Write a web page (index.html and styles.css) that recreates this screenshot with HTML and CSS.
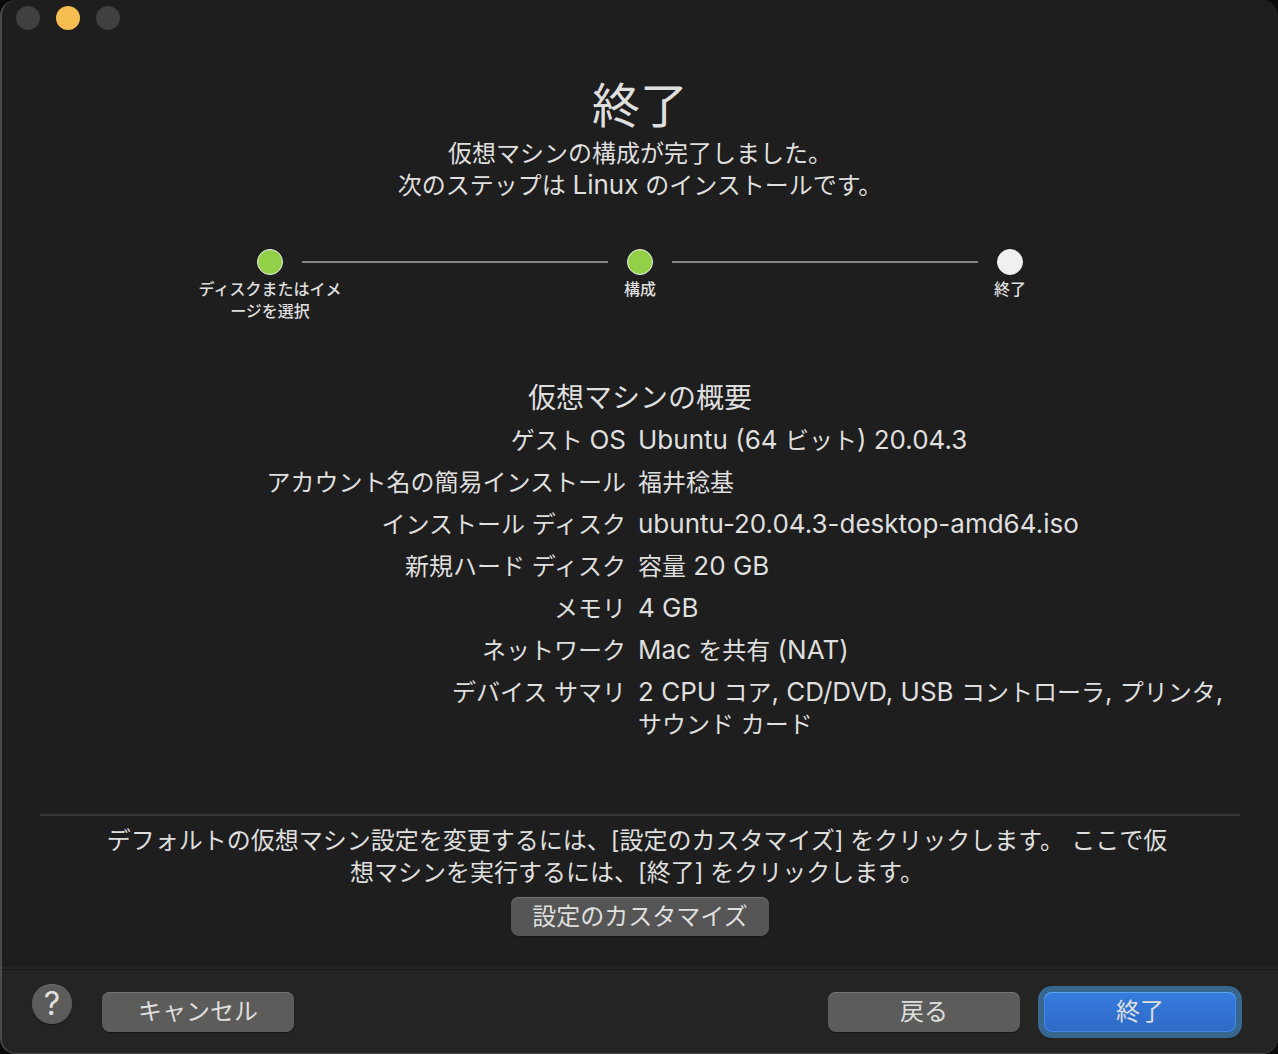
FILE: index.html
```html
<!DOCTYPE html>
<html lang="ja">
<head>
<meta charset="utf-8">
<title>終了</title>
<link rel="stylesheet" href="styles.css">
</head>
<body>
<div class="window">
  <div class="titlebar">
    <button class="light" aria-label="閉じる"></button>
    <button class="light light-min" aria-label="最小化"></button>
    <button class="light" aria-label="拡大"></button>
  </div>
  <main class="content">
    <header class="intro">
      <h1>終了</h1>
      <p>仮想マシンの構成が完了しました。<br>次のステップは <span class="latin">Linux</span> のインストールです。</p>
    </header>
    <ol class="steps">
      <li class="step"><span class="dot done"></span><span class="step-label">ディスクまたはイメ<br>ージを選択</span></li>
      <li class="step"><span class="dot done"></span><span class="step-label">構成</span></li>
      <li class="step"><span class="dot"></span><span class="step-label">終了</span></li>
    </ol>
    <section class="summary">
      <h2>仮想マシンの概要</h2>
      <table>
        <tr><th scope="row">ゲスト <span class="latin">OS</span></th><td><span class="latin">Ubuntu (64 </span>ビット<span class="latin">) 20.04.3</span></td></tr>
        <tr><th scope="row">アカウント名の簡易インストール</th><td>福井稔基</td></tr>
        <tr><th scope="row">インストール ディスク</th><td><span class="latin">ubuntu-20.04.3-desktop-amd64.iso</span></td></tr>
        <tr><th scope="row">新規ハード ディスク</th><td>容量<span class="latin"> 20 GB</span></td></tr>
        <tr><th scope="row">メモリ</th><td><span class="latin">4 GB</span></td></tr>
        <tr><th scope="row">ネットワーク</th><td><span class="latin">Mac </span>を共有<span class="latin"> (NAT)</span></td></tr>
        <tr><th scope="row">デバイス サマリ</th><td><span class="latin">2 CPU </span>コア<span class="latin">, CD/DVD, USB </span>コントローラ<span class="latin">, </span>プリンタ<span class="latin">,</span><br>サウンド カード</td></tr>
      </table>
    </section>
    <section class="customize">
      <p>デフォルトの仮想マシン設定を変更するには、[設定のカスタマイズ] をクリックします。<span class="latin"> </span>ここで仮<br>想マシンを実行するには、[終了] をクリックします。</p>
      <button class="btn btn-custom">設定のカスタマイズ</button>
    </section>
  </main>
  <footer class="footer">
    <button class="help" aria-label="ヘルプ">?</button>
    <button class="btn">キャンセル</button>
    <span class="spacer"></span>
    <button class="btn">戻る</button>
    <button class="btn btn-primary">終了</button>
  </footer>
</div>
</body>
</html>
```
FILE: styles.css
```css
* { box-sizing: border-box; }
html { background: #0b0b0b; }
body {
  margin: 0;
  color: #dfdfde;
  font: 24px/32px Inter, "Noto Sans CJK JP", sans-serif;
}
h1, h2, p, ol { margin: 0; padding: 0; font-weight: 400; }
button { margin: 0; padding: 0; border: 0; color: inherit; font: inherit; }
.latin { font-size: 26px; line-height: 26px; }
.window {
  display: flex;
  flex-direction: column;
  min-height: 100vh;
  overflow: hidden;
  background: #1e1e1e;
  border: 2px solid #4b4b4b;
  border-width: 0 0 1px 2px;
  border-radius: 16px;
}
.titlebar { display: flex; gap: 16px; padding: 6px 14px; }
.light { width: 24px; height: 24px; border-radius: 50%; background: #404040; }
.light-min { background: #f6be50; }
.content { flex: 1; padding: 38px 38px 0; }
.intro { text-align: center; }
h1 { font-size: 48px; line-height: 64px; }
.steps { display: flex; justify-content: center; margin-top: 47px; list-style: none; }
.step {
  position: relative;
  display: flex;
  flex-direction: column;
  align-items: center;
  width: 370px;
  font-size: 16px;
  font-weight: 500;
  line-height: 22px;
  text-align: center;
}
.step + .step::before {
  content: "";
  position: absolute;
  top: 12px;
  left: -153px;
  width: 306px;
  height: 2px;
  background: #858585;
}
.dot { width: 26px; height: 26px; margin-bottom: 3px; border: 1px solid #f0f0f0; border-radius: 50%; background: #f0f0f0; }
.done { background: #92d047; }
.summary { margin-top: 56px; }
h2 { font-size: 28px; line-height: 40px; text-align: center; }
table { width: calc(100% - 4px); margin-top: 2px; border-collapse: collapse; table-layout: fixed; }
th, td { padding: 5px 0; font-weight: 400; vertical-align: top; }
th { width: 50%; padding-right: 12px; text-align: right; }
td { white-space: nowrap; }
.customize { margin-top: 68px; padding-top: 9px; border-top: 2px solid #363636; text-align: center; }
.customize p { padding-right: 6px; }
.btn {
  width: 192px;
  height: 40px;
  border-radius: 8px;
  background: #5c5c5b;
  box-shadow: inset 0 1px #757575, 0 1px 1px #171717;
  line-height: 36px;
}
.btn-custom { width: 258px; height: 39px; margin-top: 8px; background: #555; }
.footer { display: flex; align-items: center; height: 84px; padding: 0 42px 0 30px; border-top: 1px solid #171717; background: #242423; box-shadow: 0 -2px #252525; }
.help { width: 40px; height: 40px; margin: 0 30px 16px 0; border-radius: 50%; background: #5c5c5b; box-shadow: inset 0 1px #6c6c6c, 0 1px 1px #171717; font-size: 32px; line-height: 40px; }
.spacer { flex: 1; }
.btn-primary { margin-left: 24px; background: linear-gradient(#367bdf, #2e6ac5); box-shadow: inset 0 1px #5ba3f0, inset 0 0 0 1px #4189e8, 0 0 0 6px #37678f; }
```
